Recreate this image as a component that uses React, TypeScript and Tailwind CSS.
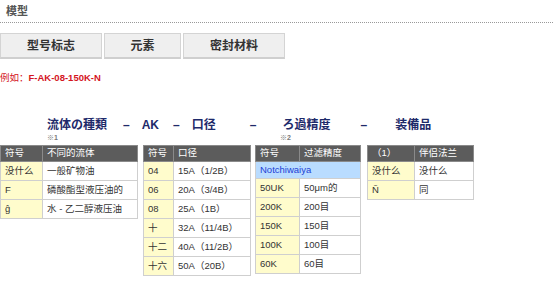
import React from 'react';

const cjk = "font-['Liberation_Sans','Noto_Sans_CJK_SC',sans-serif]";

type Row = [string, string];

const SpecTable: React.FC<{
  head: Row;
  rows: Row[];
  colW: string;
  width: string;
  className?: string;
  note?: string;
}> = ({ head, rows, colW, width, className, note }) => (
  <table className={`border-collapse table-fixed text-[9.5px] leading-none ${width} ${className ?? ''}`}>
    <colgroup>
      <col className={colW} />
      <col />
    </colgroup>
    <thead>
      <tr className="h-[16px] bg-[#5c5c5c] text-white">
        <th className="border border-[#8a8a8a] px-[4px] text-left font-normal">{head[0]}</th>
        <th className="border border-[#8a8a8a] px-[4px] text-left font-normal">{head[1]}</th>
      </tr>
    </thead>
    <tbody>
      {note && (
        <tr className="h-[17px]">
          <td colSpan={2} className="border border-[#cfcfcf] bg-[#b9dcff] px-[4px] text-[#1d3fd6]">{note}</td>
        </tr>
      )}
      {rows.map((r) => (
        <tr key={r[0]} className="h-[19px]">
          <td className="border border-[#cfcfcf] bg-[#fffccc] px-[4px] text-[#333]">{r[0]}</td>
          <td className="border border-[#cfcfcf] bg-white px-[4px] text-[#333]">{r[1]}</td>
        </tr>
      ))}
    </tbody>
  </table>
);

const App: React.FC = () => {
  return (
    <div className={`w-[553px] h-[283px] bg-white overflow-hidden ${cjk}`}>
      {/* Page title */}
      <div className="pt-[6px] pl-[6px] h-[22px] text-[11px] font-bold text-[#555] leading-none">模型</div>
      <div className="border-t border-dotted border-[#999]" />

      {/* Tabs */}
      <div className="mt-[10px] flex gap-[2px]">
        {['型号标志', '元素', '密封材料'].map((t, i) => (
          <div
            key={t}
            className={`h-[26px] flex items-center justify-center bg-[#efefef] border border-[#d4d4d4] border-b-2 border-b-[#cfcfcf] text-[12px] font-bold text-[#333] ${
              i === 0 ? 'w-[102px]' : i === 1 ? 'w-[77px]' : 'w-[102px]'
            }`}
          >
            {t}
          </div>
        ))}
      </div>

      <div className="mt-[14px] text-[9.5px] text-[#d4161f] leading-none">
        例如：<span className="font-bold">F-AK-08-150K-N</span>
      </div>

      {/* Part number breakdown */}
      <div className="mt-[36px] flex items-center text-[12px] font-bold text-[#1e2a6a] leading-none">
        <span className="ml-[47px]">流体の種類</span>
        <span className="ml-[16px]">–</span>
        <span className="ml-[12px]">AK</span>
        <span className="ml-[14px]">–</span>
        <span className="ml-[12px]">口径</span>
        <span className="ml-[34px]">–</span>
        <span className="ml-[26px]">ろ過精度</span>
        <span className="ml-[30px]">–</span>
        <span className="ml-[28px]">装備品</span>
      </div>
      <div className="mt-[3px] flex text-[7px] font-bold text-[#777] leading-none">
        <span className="ml-[47px]">※1</span>
        <span className="ml-[222px]">※2</span>
      </div>

      <div className="mt-[4px] flex items-start">
        <SpecTable
          width="w-[138px]"
          colW="w-[42px]"
          head={['符号', '不同的流体']}
          rows={[
            ['没什么', '一般矿物油'],
            ['F', '磷酸酯型液压油的'],
            ['ĝ', '水 - 乙二醇液压油'],
          ]}
        />
        <SpecTable
          width="w-[108px]"
          colW="w-[30px]"
          className="ml-[5px]"
          head={['符号', '口径']}
          rows={[
            ['04', '15A（1/2B）'],
            ['06', '20A（3/4B）'],
            ['08', '25A（1B）'],
            ['十', '32A（11/4B）'],
            ['十二', '40A（11/2B）'],
            ['十六', '50A（20B）'],
          ]}
        />
        <SpecTable
          width="w-[106px]"
          colW="w-[44px]"
          className="ml-[4px]"
          head={['符号', '过滤精度']}
          note="Notchiwaiya"
          rows={[
            ['50UK', '50μm的'],
            ['200K', '200目'],
            ['150K', '150目'],
            ['100K', '100目'],
            ['60K', '60目'],
          ]}
        />
        <SpecTable
          width="w-[107px]"
          colW="w-[47px]"
          className="ml-[6px]"
          head={['（1）', '伴侣法兰']}
          rows={[
            ['没什么', '没什么'],
            ['Ñ', '同'],
          ]}
        />
      </div>
    </div>
  );
};

export default App;
